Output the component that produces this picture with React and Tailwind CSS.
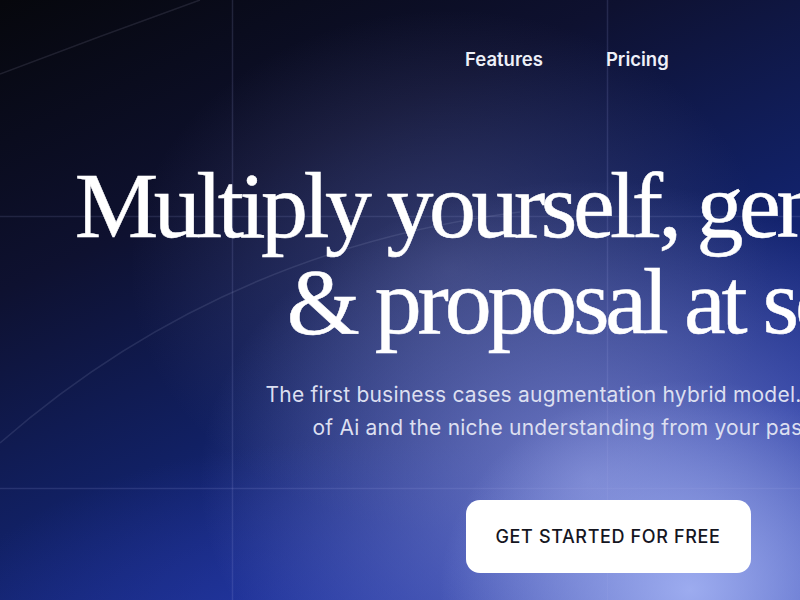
import React from "react";

export default function App() {
  return (
    <div className="relative w-[800px] h-[600px] overflow-hidden bg-[radial-gradient(ellipse_250px_210px_at_690px_590px,rgba(165,180,245,0.9),rgba(165,180,245,0)),radial-gradient(ellipse_390px_300px_at_590px_480px,rgba(130,140,212,0.8),rgba(130,140,212,0)),radial-gradient(ellipse_320px_260px_at_450px_270px,rgba(95,100,152,0.45),rgba(95,100,152,0)),radial-gradient(ellipse_420px_200px_at_360px_640px,rgba(40,60,170,0.75),rgba(40,60,170,0)),linear-gradient(155deg,#06070c_0%,#0e1130_30%,#112063_55%,#1b2f98_80%,#2a40b0_100%)]">
      <svg className="absolute inset-0 pointer-events-none" width="800" height="600" viewBox="0 0 800 600" fill="none">
        <line x1="232.5" y1="0" x2="232.5" y2="600" stroke="rgba(160,170,230,0.16)" strokeWidth="1.5" />
        <line x1="607.5" y1="0" x2="607.5" y2="600" stroke="rgba(160,170,230,0.16)" strokeWidth="1.5" />
        <line x1="0" y1="216.5" x2="800" y2="216.5" stroke="rgba(160,170,230,0.14)" strokeWidth="1.5" />
        <line x1="0" y1="488.5" x2="800" y2="488.5" stroke="rgba(160,170,230,0.16)" strokeWidth="1.5" />
        <path d="M0 74 Q100 36 200 0" stroke="rgba(200,200,230,0.12)" strokeWidth="1.5" />
        <path d="M0 443 Q220 250 520 212" stroke="rgba(200,205,240,0.12)" strokeWidth="1.5" />
      </svg>

      <div className="relative">
        <nav className="flex gap-[63px] pl-[465px] pt-[45px] font-['Inter',sans-serif] text-[18.5px] leading-[28px] font-semibold text-[#eef0f8]">
          <span>Features</span>
          <span>Pricing</span>
        </nav>

        <div className="w-[1216px] flex flex-col items-center text-center">
          <h1 className="mt-[84px] font-['Liberation_Serif',serif] text-[94px] leading-[96px] tracking-[-0.045em] text-white font-normal whitespace-nowrap [-webkit-text-stroke:0.5px_#ffffff]">
            <span className="tracking-[-0.048em]">Multiply yourself, generate case</span>
            <br />
            &amp; proposal at scale
          </h1>
          <p className="mt-[29px] font-['Inter',sans-serif] text-[21px] leading-[33px] tracking-[0.01em] text-[#dcdff0] whitespace-nowrap">
            The first business cases augmentation hybrid model. Get the power
            <br />
            of Ai and the niche understanding from your past projects.
          </p>
          <button className="mt-[56px] h-[73px] w-[285px] rounded-[14px] bg-white font-['Inter',sans-serif] text-[18px] font-medium tracking-[0.035em] text-[#15161f]">
            GET STARTED FOR FREE
          </button>
        </div>
      </div>
    </div>
  );
}
